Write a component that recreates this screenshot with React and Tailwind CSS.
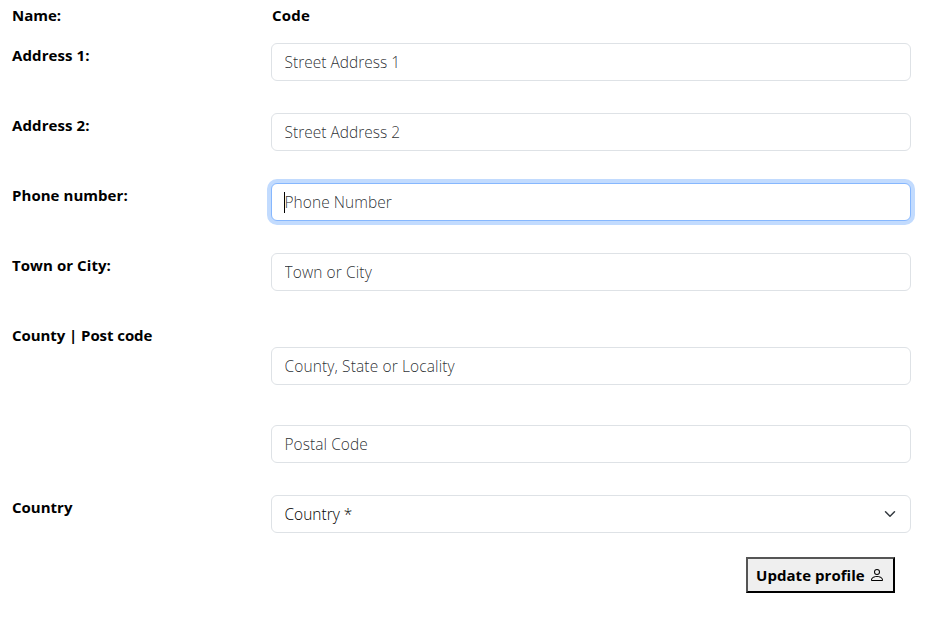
import { BsPerson } from "react-icons/bs";

const fieldBase =
  "block h-[38px] w-full rounded-md border bg-white px-[12.5px] text-[15.5px] leading-6 font-light outline-none placeholder:text-[#212529]/95 placeholder:opacity-100";

function Label({ children, className }) {
  return (
    <div className={`w-[259px] shrink-0 text-[15px] leading-6 font-bold whitespace-nowrap ${className || ""}`}>
      <span>{children}</span>
    </div>
  );
}

function TextField({ placeholder, className }) {
  return (
    <input
      type="text"
      placeholder={placeholder}
      className={`${fieldBase} border-[#dee2e6] ${className || ""}`}
    />
  );
}

function Row({ label, labelClass, children, className }) {
  return (
    <div className={`flex ${className || ""}`}>
      <Label className={labelClass}>{label}</Label>
      <div className="w-[640px]">{children}</div>
    </div>
  );
}

export default function App() {
  return (
    <form className="h-[617px] w-[929px] overflow-hidden bg-white pt-[3px] pl-3 font-['Open_Sans','Noto_Sans',sans-serif] text-black">
      <Row label="Name:" className="h-10">
        <span className="pl-px text-[15px] leading-6 font-bold tracking-[0.2px]">Code</span>
      </Row>
      <Row label="Address 1:" labelClass="tracking-[0.1px]" className="h-[70px]">
        <TextField placeholder="Street Address 1" />
      </Row>
      <Row label="Address 2:" labelClass="tracking-[0.1px]" className="h-[70px]">
        <TextField placeholder="Street Address 2" />
      </Row>
      <Row label="Phone number:" labelClass="tracking-[0.05px]" className="h-[70px]">
        <div className="flex h-[38px] items-center rounded-md border border-[#86b7fe] bg-white px-3 text-[15.5px] leading-6 font-light text-[#212529]/95 shadow-[0_0_0_4px_#c2dbfe]">
          <span className="-mr-px h-[21px] w-px bg-black" />
          <span className="pl-[0.5px] tracking-[0.05px]">Phone Number</span>
        </div>
      </Row>
      <Row label="Town or City:" labelClass="tracking-[0.07px]" className="h-[70px]">
        <TextField placeholder="Town or City" className="tracking-[0.1px]" />
      </Row>
      <Row label="County | Post code" labelClass="tracking-[-0.07px]" className="h-[172px]">
        <div className="flex flex-col gap-10 pt-6">
          <TextField placeholder="County, State or Locality" className="tracking-[0.12px]" />
          <TextField placeholder="Postal Code" className="tracking-[0.05px]" />
        </div>
      </Row>
      <Row label="Country" className="h-[62px]">
        <div className="flex h-[38px] items-center justify-between rounded-md border border-[#dee2e6] pr-3 pl-[12.5px] text-[15.5px] leading-6 font-light text-black">
          <span>Country *</span>
          <svg viewBox="0 0 16 16" className="h-3 w-4" fill="none" stroke="#343a40" strokeLinecap="round" strokeLinejoin="round" strokeWidth="2">
            <path d="m2 5 6 6 6-6" />
          </svg>
        </div>
      </Row>
      <div className="flex w-[883px] justify-end">
        <button
          type="button"
          className="flex h-9 w-[149px] items-center border-2 border-t-[#555] border-r-black border-b-black border-l-[#555] bg-[#efefef] pl-2 text-[15px] leading-6 font-bold whitespace-nowrap"
        >
          <span className="w-[113px] text-left tracking-[0.05px]">Update profile</span>
          <BsPerson className="size-4 shrink-0" />
        </button>
      </div>
    </form>
  );
}
